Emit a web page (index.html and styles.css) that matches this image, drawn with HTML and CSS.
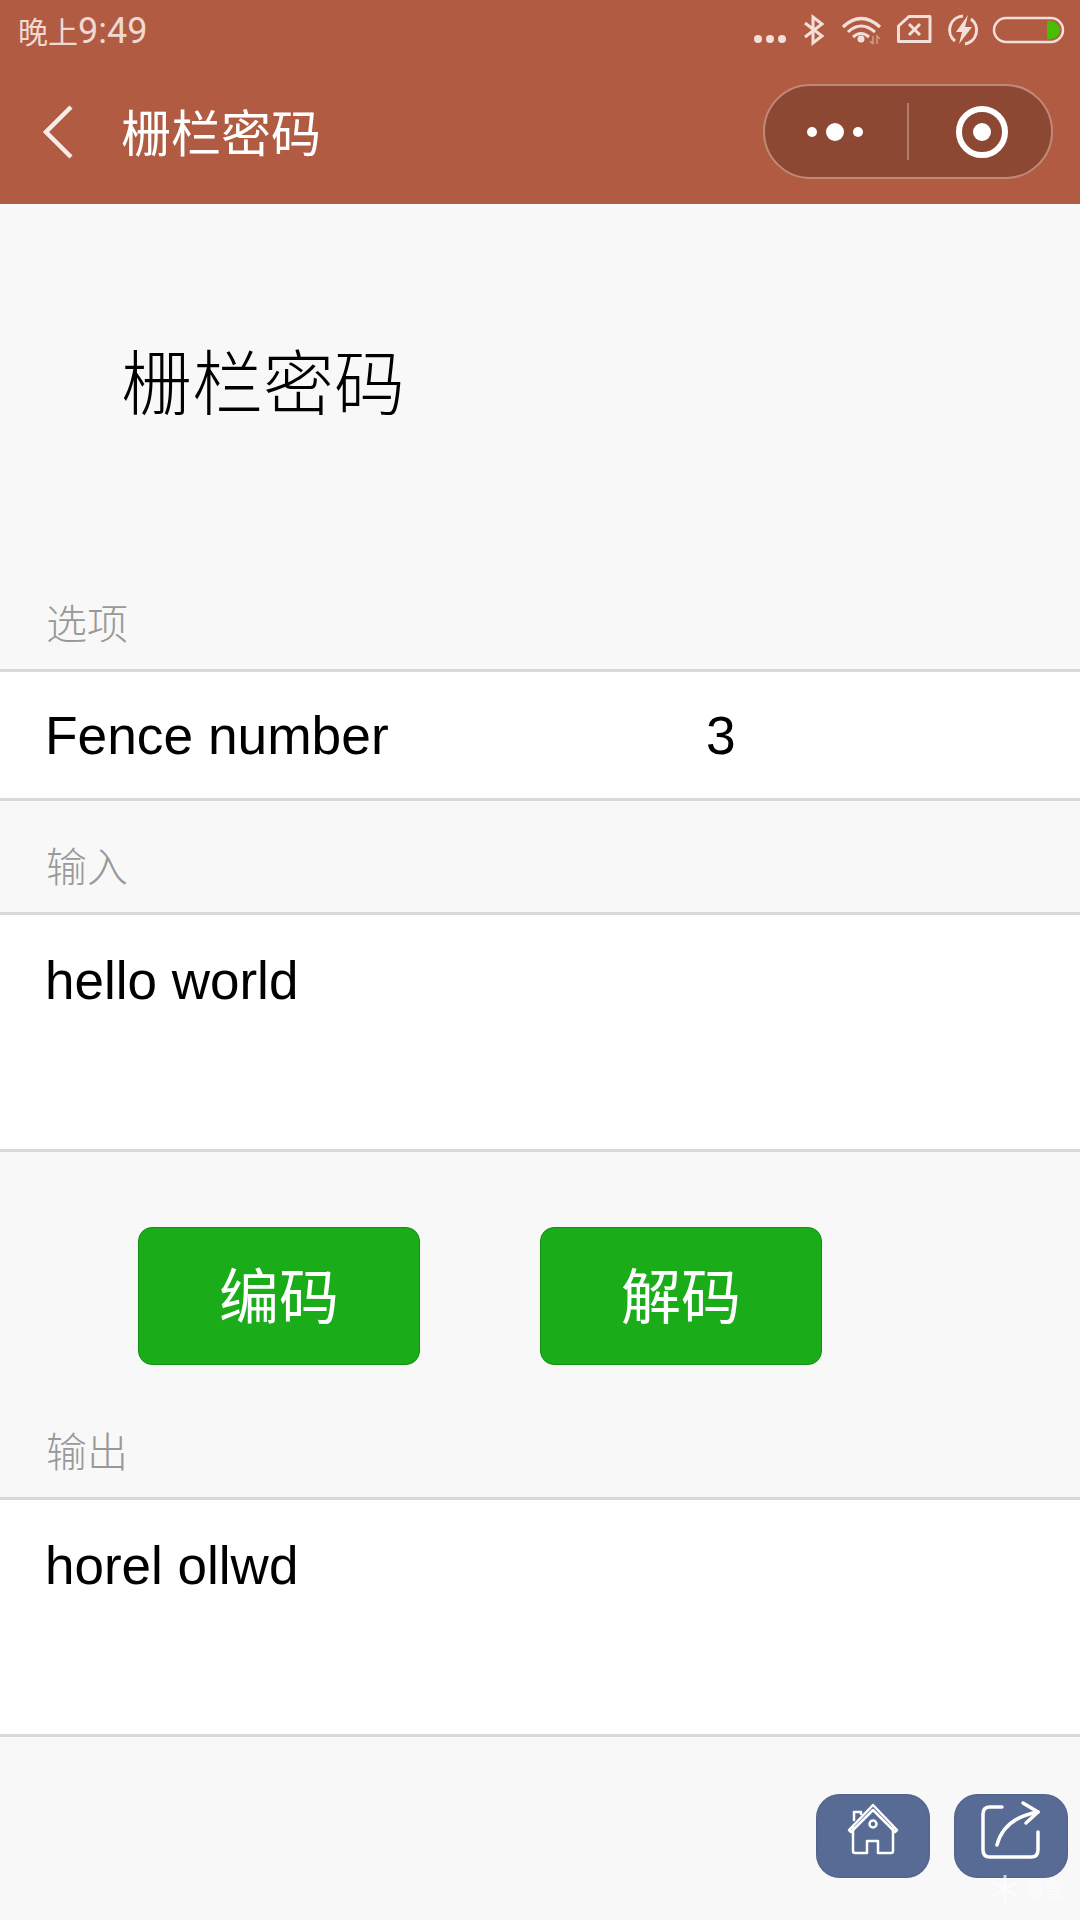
FILE: index.html
```html
<!DOCTYPE html>
<html>
  <head>
    <meta charset="utf-8">
    <title>栅栏密码</title>
    <link rel="stylesheet" href="styles.css">
  </head>
  <body>
    <!-- header -->
    <header class="top">
      <div class="status">
        <span class="time">晚上<span class="time-num">9:49</span></span>
        <svg class="status-icons" width="330" height="60" viewBox="750 0 330 60">
          <g fill="#f3dfd9">
            <circle cx="758" cy="39" r="4"/><circle cx="770" cy="39" r="4"/><circle cx="782" cy="39" r="4"/>
          </g>
          <g fill="none" stroke="#f3dfd9" stroke-width="3">
            <path d="M805 23L822 36L813 43V17L822 24L805 37"/>
            <path d="M843 27Q861 10 880 27" stroke-width="3.5"/>
            <path d="M848 32Q861 20 875 32"/>
            <path d="M853 37Q861 30 869 37"/>
            <path d="M909 16.500H930V41.500H898.500V26Z" stroke-linejoin="round"/>
            <path d="M909 24L920 35M920 24L909 35"/>
            <path d="M955 41A14 14 0 0 1 963 16M971 19A14 14 0 0 1 965 44" />
          </g>
          <circle cx="861" cy="39" r="3.500" fill="#f3dfd9"/>
          <path d="M873 44V36M870 41L873 44M877 44V36L880 39" fill="none" stroke="#d59b8a" stroke-width="1.500"/>
          <path d="M968 15L956 32H962L959 44L972 27H965Z" fill="#f3dfd9"/>
          <rect x="994" y="18" width="69" height="24" rx="12" fill="none" stroke="#f3dfd9" stroke-width="2.500"/>
          <path d="M1047 21H1051A9 9 0 0 1 1051 39H1047Z" fill="#44c000"/>
        </svg>
      </div>
      <div class="nav">
        <svg class="back" width="30" height="54" viewBox="0 0 30 54">
          <path d="M28 2L3 27L28 52" fill="none" stroke="#f8ecE8" stroke-width="4.500"/>
        </svg>
        <span class="nav-title">栅栏密码</span>
        <div class="capsule">
          <svg class="capsule-more" width="56" height="20" viewBox="0 0 56 20">
            <circle cx="5" cy="10" r="5" fill="#fff"/><circle cx="28" cy="10" r="9" fill="#fff"/><circle cx="51" cy="10" r="5" fill="#fff"/>
          </svg>
          <span class="capsule-line"></span>
          <svg class="capsule-close" width="52" height="52" viewBox="0 0 52 52">
            <circle cx="26" cy="26" r="23" fill="none" stroke="#fff" stroke-width="6"/>
            <circle cx="26" cy="26" r="9" fill="#fff"/>
          </svg>
        </div>
      </div>
    </header>

    <!-- content -->
    <h1 class="page-title">栅栏密码</h1>

    <div class="label">选项</div>
    <div class="cell">
      <span class="cell-name">Fence number</span>
      <span>3</span>
    </div>

    <div class="label">输入</div>
    <div class="box">hello world</div>

    <div class="buttons">
      <a class="btn">编码</a>
      <a class="btn">解码</a>
    </div>

    <div class="label label-out">输出</div>
    <div class="box">horel ollwd</div>

    <!-- floating buttons -->
    <div class="float">
      <a class="float-btn">
        <svg width="114" height="84" viewBox="0 0 114 84" fill="none" stroke="#fff" stroke-width="2.500" stroke-linejoin="round" stroke-linecap="round">
          <path d="M37 33V57Q37 59 39 59H51V47H62V59H75Q77 59 77 57V33"/>
          <path d="M33 36L57 11L81 36L79 38L57 16L35 38Z"/>
          <path d="M38 26V18H45V20"/>
          <circle cx="57" cy="30" r="3.500"/>
        </svg>
      </a>
      <a class="float-btn">
        <svg width="114" height="84" viewBox="0 0 114 84" fill="none" stroke="#fff" stroke-width="3.500" stroke-linejoin="round" stroke-linecap="round">
          <path d="M48 13H36Q29 13 29 20V56Q29 63 36 63H77Q84 63 84 56V38"/>
          <path d="M43 51Q50 24 84 18"/>
          <path d="M69 9L84 18L72 29"/>
        </svg>
      </a>
      <div class="mark">
        <svg class="mark-flake" width="26" height="28" viewBox="0 0 26 28" fill="none" stroke="#fff" stroke-width="3">
          <path d="M13 0V28M1 7L25 21M25 7L1 21"/>
        </svg>
        看雪
      </div>
    </div>
  </body>
</html>
```

FILE: styles.css
```css
* {
    box-sizing: border-box;
}

body {
    margin: 0;
    height: 1920px;
    position: relative;
    overflow: hidden;
    background-color: #f8f8f8;
    color: #000;
    font-family: "Liberation Sans", "Noto Sans CJK SC", sans-serif;
}

/* header */
.top {
    height: 204px;
    background-color: #b05b42;
    color: #fff;
}

.status {
    height: 60px;
    display: flex;
    justify-content: space-between;
    padding-left: 18px;
}

.time {
    font-family: "Noto Sans CJK SC", sans-serif;
    font-size: 30px;
    font-weight: 400;
    line-height: 60px;
    color: #f0d9d2;
}

.time-num {
    font-family: "Roboto", sans-serif;
    font-size: 36px;
}

.nav {
    height: 144px;
    display: flex;
    align-items: center;
    padding: 0 27px 0 43px;
}

.back {
    margin-right: 48px;
}

.nav-title {
    flex: 1;
    font-family: "Noto Sans CJK SC", sans-serif;
    font-size: 50px;
    font-weight: 400;
    line-height: 60px;
    padding-bottom: 4px;
}

.capsule {
    width: 290px;
    height: 95px;
    display: flex;
    align-items: center;
    background-color: #8c4833;
    border: 2px solid #c08a79;
    border-radius: 48px;
    margin-top: -1px;
}

.capsule-more {
    margin-left: 42px;
}

.capsule-line {
    width: 2px;
    height: 57px;
    background-color: #b27a68;
    margin: 0 47px 0 44px;
}

/* content */
.page-title {
    height: 354px;
    margin: 0;
    padding: 0 0 6px 121px;
    display: flex;
    align-items: center;
    font-family: "Noto Sans CJK SC", sans-serif;
    font-size: 71px;
    font-weight: 300;
}

.label {
    height: 114px;
    padding: 33px 0 18px 46px;
    font-family: "Noto Sans CJK SC", sans-serif;
    font-size: 41px;
    font-weight: 300;
    line-height: 60px;
    color: #999;
    border-bottom: 3px solid #d9d9d9;
}

.label-out {
    margin-top: 21px;
}

.cell {
    height: 129px;
    display: flex;
    align-items: center;
    padding-left: 45px;
    background-color: #fff;
    font-size: 53.3px;
    border-bottom: 3px solid #d9d9d9;
}

.cell-name {
    width: 661px;
}

.box {
    height: 237px;
    padding: 34px 45px 0;
    background-color: #fff;
    font-size: 53px;
    line-height: 64px;
    border-bottom: 3px solid #d9d9d9;
}

.buttons {
    display: flex;
    gap: 120px;
    padding: 75px 0 0 138px;
}

.btn {
    width: 282px;
    height: 138px;
    display: flex;
    align-items: center;
    justify-content: center;
    padding-bottom: 7px;
    background-color: #1aac19;
    border: 1px solid #129012;
    border-radius: 14px;
    color: #fff;
    font-family: "Noto Sans CJK SC", sans-serif;
    font-size: 60px;
    font-weight: 400;
}

/* floating buttons */
.float {
    position: absolute;
    top: 1794px;
    left: 816px;
    display: flex;
    gap: 24px;
}

.float-btn {
    width: 114px;
    height: 84px;
    background-color: #586b95;
    border-radius: 24px;
    box-shadow: inset 0 0 2px #46557a;
}

.float-btn svg {
    display: block;
}

.mark {
    position: absolute;
    top: 81px;
    left: 176px;
    display: flex;
    align-items: center;
    gap: 6px;
    font-family: "Noto Sans CJK SC", sans-serif;
    font-size: 20px;
    line-height: 28px;
    color: #fff;
    opacity: 0.7;
}
```
